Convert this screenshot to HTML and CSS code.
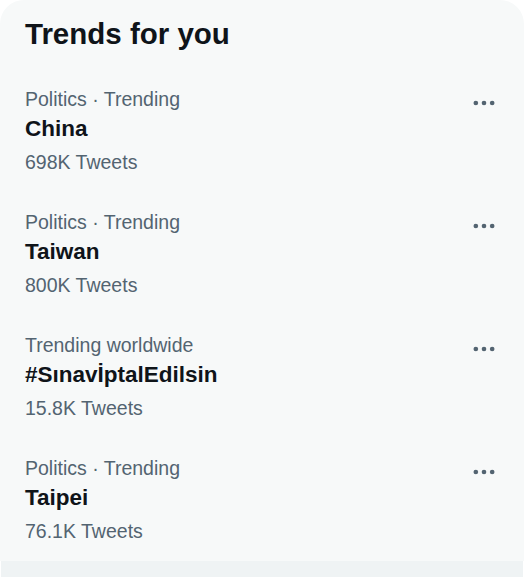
FILE: index.html
```html
<!DOCTYPE html>
<html>
<head>
<meta charset="utf-8">
<link rel="stylesheet" href="styles.css">
</head>
<body>
<section class="card">
  <h2 class="title">Trends for you</h2>
  <div class="trend">
    <div class="info">
      <div class="meta">Politics · Trending</div>
      <div class="name">China</div>
      <div class="count">698K Tweets</div>
    </div>
    <svg class="more" viewBox="0 0 24 24"><circle cx="5" cy="12" r="2"/><circle cx="12" cy="12" r="2"/><circle cx="19" cy="12" r="2"/></svg>
  </div>
  <div class="trend">
    <div class="info">
      <div class="meta">Politics · Trending</div>
      <div class="name">Taiwan</div>
      <div class="count">800K Tweets</div>
    </div>
    <svg class="more" viewBox="0 0 24 24"><circle cx="5" cy="12" r="2"/><circle cx="12" cy="12" r="2"/><circle cx="19" cy="12" r="2"/></svg>
  </div>
  <div class="trend">
    <div class="info">
      <div class="meta">Trending worldwide</div>
      <div class="name">#SınavİptalEdilsin</div>
      <div class="count">15.8K Tweets</div>
    </div>
    <svg class="more" viewBox="0 0 24 24"><circle cx="5" cy="12" r="2"/><circle cx="12" cy="12" r="2"/><circle cx="19" cy="12" r="2"/></svg>
  </div>
  <div class="trend">
    <div class="info">
      <div class="meta">Politics · Trending</div>
      <div class="name">Taipei</div>
      <div class="count">76.1K Tweets</div>
    </div>
    <svg class="more" viewBox="0 0 24 24"><circle cx="5" cy="12" r="2"/><circle cx="12" cy="12" r="2"/><circle cx="19" cy="12" r="2"/></svg>
  </div>
</section>
<div class="next"></div>
</body>
</html>
```

FILE: styles.css
```css
html, body {
  margin: 0;
  padding: 0;
  background: #ffffff;
}
body {
  font-family: "Liberation Sans", Arial, sans-serif;
  color: #0f1419;
  width: 528px;
}
.card {
  width: 524px;
  background: #f7f9f9;
  border-radius: 24px 24px 0 0;
}
.title {
  margin: 0;
  padding: 16px 24px 17px 25px;
  font-size: 29.5px;
  line-height: 36px;
  font-weight: 700;
  color: #0f1419;
}
.trend {
  display: flex;
  align-items: flex-start;
  padding: 18px 24px 18px 25px;
}
.info {
  flex: 1;
}
.meta, .count {
  font-size: 19.5px;
  line-height: 24px;
  color: #536471;
}
.name {
  padding-top: 3px;
  font-size: 22.5px;
  line-height: 30px;
  font-weight: 700;
  color: #0f1419;
}
.count {
  margin-top: 6px;
}
.more {
  width: 28px;
  height: 28px;
  margin-top: 2px;
  margin-right: 2px;
  fill: #536471;
}
.next {
  margin: 0 5px 0 1px;
  width: 522px;
  height: 16px;
  background: #eff3f4;
}
```
